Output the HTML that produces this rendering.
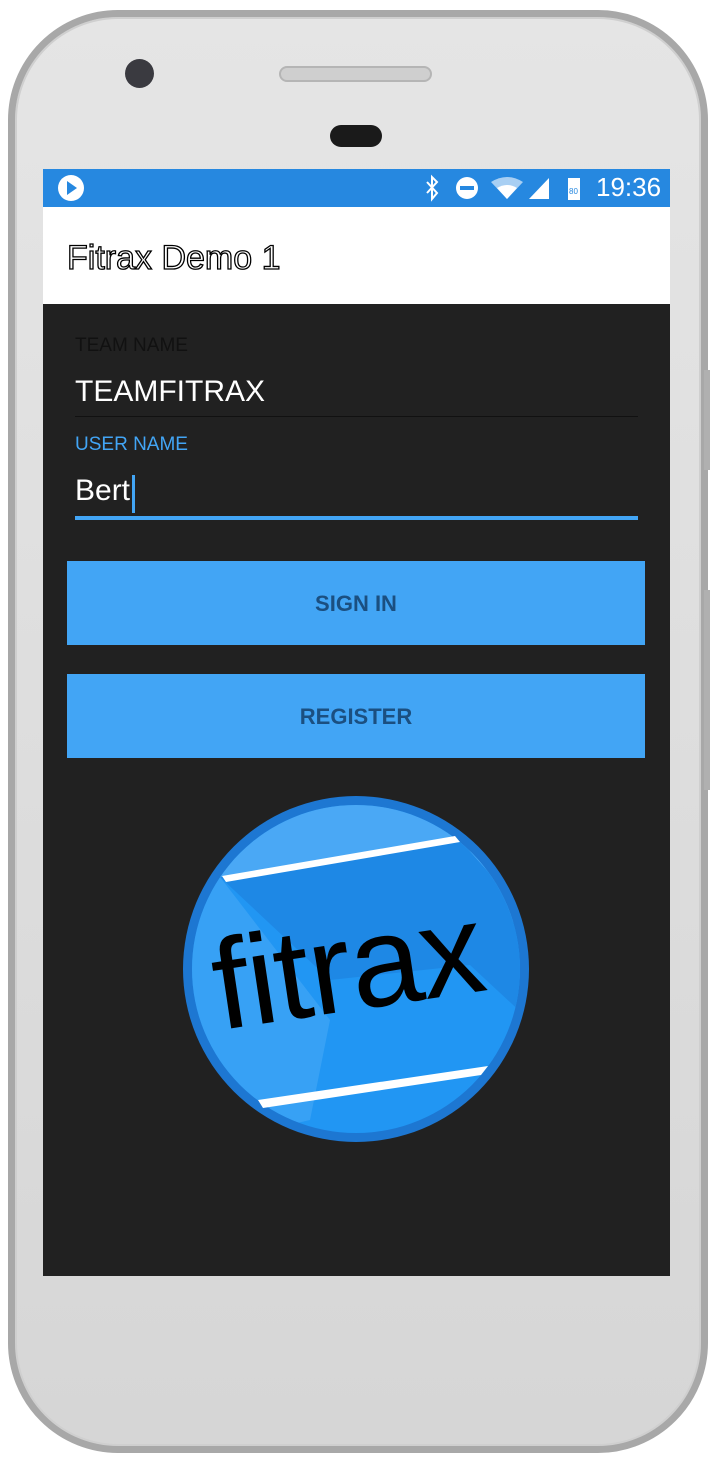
<!DOCTYPE html>
<html><head><style>
*{margin:0;padding:0;box-sizing:border-box}
body{width:716px;height:1462px;background:#fff;position:relative;overflow:hidden;font-family:"Liberation Sans",sans-serif}
.ph{position:absolute;left:8px;top:10px;width:700px;height:1443px;border-radius:110px;background:linear-gradient(#e5e5e5,#d6d6d6);border:7px solid #a8a8a8;box-shadow:inset 0 0 0 2px #cfcfcf}
.scr{position:absolute;left:43px;top:169px;width:627px;height:1107px;background:#212121}
.sb{position:absolute;left:0;top:0;width:627px;height:38px;background:#2688e0;color:#fff}
.ab{position:absolute;left:0;top:38px;width:627px;height:97px;background:#fff}
.t{position:absolute;font-family:"Liberation Sans",sans-serif}
.btn{position:absolute;left:24px;width:578px;height:84px;background:#42a5f5;color:#1b4f80;font-weight:bold;font-size:22px;text-align:center;line-height:86px}
</style></head><body>
<div class="ph"></div>
<div style="position:absolute;left:125px;top:59px;width:29px;height:29px;border-radius:50%;background:#3a3a40"></div>
<div style="position:absolute;left:279px;top:66px;width:153px;height:16px;border-radius:8px;background:#cfcfcf;border:2px solid #b5b5b5"></div>
<div style="position:absolute;left:330px;top:125px;width:52px;height:22px;border-radius:11px;background:#1a1a1a"></div>
<div style="position:absolute;left:704px;top:370px;width:6px;height:100px;background:#b0b0b0"></div>
<div style="position:absolute;left:704px;top:590px;width:6px;height:200px;background:#b0b0b0"></div>
<div class="scr">
 <div class="sb">
  <svg style="position:absolute;left:14px;top:5px" width="28" height="28"><circle cx="14" cy="14" r="13" fill="#fff"/><path d="M10 7 L20 14 L10 21Z" fill="#2688e0"/></svg>
  <svg style="position:absolute;left:382px;top:5px" width="160" height="28">
   <path d="M2 8 L12 19 L7 25 L7 3 L12 8 L2 19" stroke="#fff" stroke-width="2" fill="none"/>
   <circle cx="42" cy="14" r="11" fill="#fff"/><rect x="35" y="12" width="14" height="4" fill="#2688e0"/>
   <path d="M66 8 Q82 -2 98 8 L82 25Z" fill="#fff" opacity=".6"/><path d="M72 14 Q82 8 92 14 L82 25Z" fill="#fff"/>
   <path d="M104 25 L124 4 L124 25Z" fill="#fff"/>
   <rect x="143" y="4" width="12" height="22" fill="#fff"/><text x="144" y="20" font-size="8" fill="#2688e0">80</text>
  </svg>
  <div class="t" style="left:553px;top:3px;font-size:26px">19:36</div>
 </div>
 <div class="ab"><div class="t" style="left:24px;top:32px;font-size:34px;color:#fff;-webkit-text-stroke:1.3px #000">Fitrax Demo 1</div></div>
 <div class="t" style="left:32px;top:166px;font-size:19px;color:#111">TEAM NAME</div>
 <div class="t" style="left:32px;top:206px;font-size:30px;color:#fff">TEAMFITRAX</div>
 <div style="position:absolute;left:32px;top:247px;width:563px;height:1px;background:#111"></div>
 <div class="t" style="left:32px;top:265px;font-size:19px;color:#42a5f5">USER NAME</div>
 <div class="t" style="left:32px;top:305px;font-size:30px;color:#fff">Bert</div>
 <div style="position:absolute;left:89px;top:306px;width:3px;height:38px;background:#42a5f5"></div>
 <div style="position:absolute;left:32px;top:347px;width:563px;height:4px;background:#42a5f5"></div>
 <div class="btn" style="top:392px">SIGN IN</div>
 <div class="btn" style="top:505px">REGISTER</div>
</div>
<svg style="position:absolute;left:180px;top:790px" width="360" height="360">
 <defs><clipPath id="c"><circle cx="176" cy="179" r="164"/></clipPath></defs>
 <circle cx="176" cy="179" r="173" fill="#1d77d2"/>
 <circle cx="176" cy="179" r="164" fill="#2196f3"/>
 <g clip-path="url(#c)">
  <path d="M0 0 L360 0 L360 150 L300 110 L40 87 L0 80Z" fill="#4aa8f5"/>
  <path d="M40 87 L278 48 L360 140 L360 240 L290 175 L150 190Z" fill="#1e88e5"/>
  <path d="M0 80 L40 87 L150 230 L130 330 L0 360Z" fill="#42a5f5" opacity=".7"/>
 </g>
 <path d="M42 86 L275 46 L280 52 L46 92Z" fill="#fff"/>
 <path d="M78 310 L308 276 L301 285 L83 318Z" fill="#fff"/>
 <text x="0" y="0" transform="translate(40 240) rotate(-8.5)" font-family="Liberation Sans, sans-serif" font-size="128" fill="#000" textLength="272">fitrax</text>
</svg>
</body></html>
